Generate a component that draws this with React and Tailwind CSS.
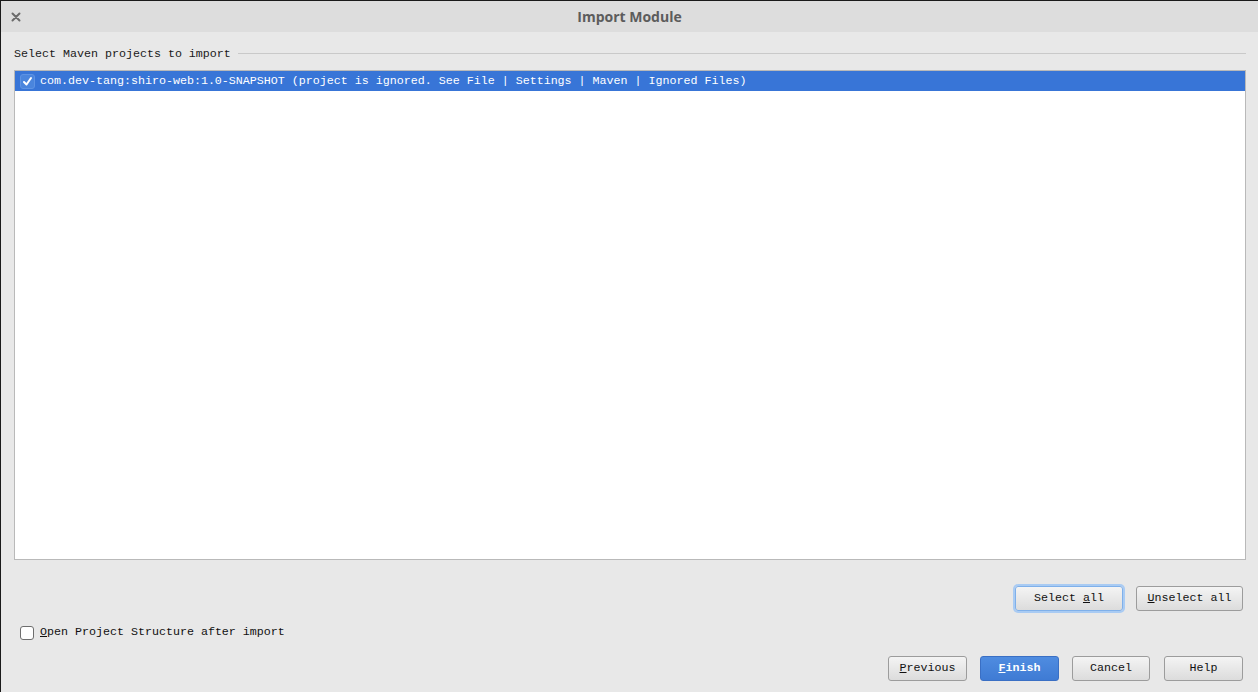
import React from 'react';

const mono = { fontFamily: '"Liberation Mono", "Courier New", monospace' };

const Button = ({ children, width, primary, focused }) => {
  let cls = 'h-[25px] pt-[1px] rounded-[3px] border text-[11.67px] flex items-center justify-center whitespace-pre ';
  if (primary) {
    cls += 'border-[#3a6fc4] bg-gradient-to-b from-[#4f8ce0] to-[#3f7bd4] text-white font-bold';
  } else if (focused) {
    cls += 'border-[#7fb0ea] shadow-[0_0_0_2px_#a9cbf3] bg-gradient-to-b from-[#f4f4f4] to-[#dcdcdc] text-[#111]';
  } else {
    cls += 'border-[#9c9c9c] bg-gradient-to-b from-[#f4f4f4] to-[#dcdcdc] text-[#111]';
  }
  return (
    <div className={cls} style={{ ...mono, width }}>
      {children}
    </div>
  );
};

const App = () => {
  return (
    <div className="w-[1258px] h-[692px] flex flex-col border-t border-l border-[#1a1a1a] bg-[#e8e8e8] overflow-hidden">
      {/* title bar */}
      <div className="relative h-[31px] bg-[#dddddd] flex items-center justify-center shrink-0">
        <svg className="absolute left-[10px] top-[11px]" width="10" height="10" viewBox="0 0 10 10">
          <path d="M1.5 1.5 L8.5 8.5 M8.5 1.5 L1.5 8.5" stroke="#6b6b6b" strokeWidth="2" strokeLinecap="round" />
        </svg>
        <span className="text-[14px] font-bold text-[#5c5c5c]" style={{ fontFamily: '"Open Sans", "Noto Sans", sans-serif' }}>
          Import Module
        </span>
      </div>

      <div className="flex flex-col pl-[13px] pr-[12px]" style={mono}>
        {/* section header */}
        <div className="flex items-center h-[14px] mt-[16px] text-[11.67px] text-[#1a1a1a]">
          <span>Select Maven projects to import</span>
          <div className="flex-1 h-px bg-[#c9c9c9] ml-[7px] -translate-y-[2px]" />
        </div>

        {/* list */}
        <div className="mt-[8px] h-[490px] border border-[#b9b9b9] bg-white">
          <div className="h-[20px] bg-[#3875d7] flex items-center pl-[5px] text-white text-[11.67px]">
            <div className="w-[15px] h-[15px] rounded-[3px] border border-[#5d93e4] bg-[#4a85dd] flex items-center justify-center">
              <svg width="11" height="11" viewBox="0 0 11 11">
                <path d="M2 6 L4.5 8.5 L9 2" fill="none" stroke="white" strokeWidth="2" strokeLinecap="round" strokeLinejoin="round" />
              </svg>
            </div>
            <span className="ml-[5px] pt-[1px] whitespace-pre">
              com.dev-tang:shiro-web:1.0-SNAPSHOT (project is ignored. See File | Settings | Maven | Ignored Files)
            </span>
          </div>
        </div>

        {/* select buttons */}
        <div className="flex justify-end gap-[13px] mt-[26px] pr-[3px]">
          <Button width={108} focused>
            Select <span className="underline">a</span>ll
          </Button>
          <Button width={107}>
            <span className="underline">U</span>nselect all
          </Button>
        </div>

        {/* checkbox */}
        <div className="flex items-center mt-[14px] h-[15px] pl-[6px]">
          <div className="w-[14px] h-[14px] rounded-[3px] border border-[#6e6e6e] bg-white" />
          <span className="ml-[6px] text-[11.67px] text-[#111] whitespace-pre">
            <span className="underline">O</span>pen Project Structure after import
          </span>
        </div>

        {/* bottom buttons */}
        <div className="flex justify-end mt-[16px] pr-[3px]">
          <Button width={79}>
            <span className="underline">P</span>revious
          </Button>
          <div className="w-[13px]" />
          <Button width={79} primary>
            <span className="underline">F</span>inish
          </Button>
          <div className="w-[13px]" />
          <Button width={78}>Cancel</Button>
          <div className="w-[14px]" />
          <Button width={79}>Help</Button>
        </div>
      </div>
    </div>
  );
};

export default App;
